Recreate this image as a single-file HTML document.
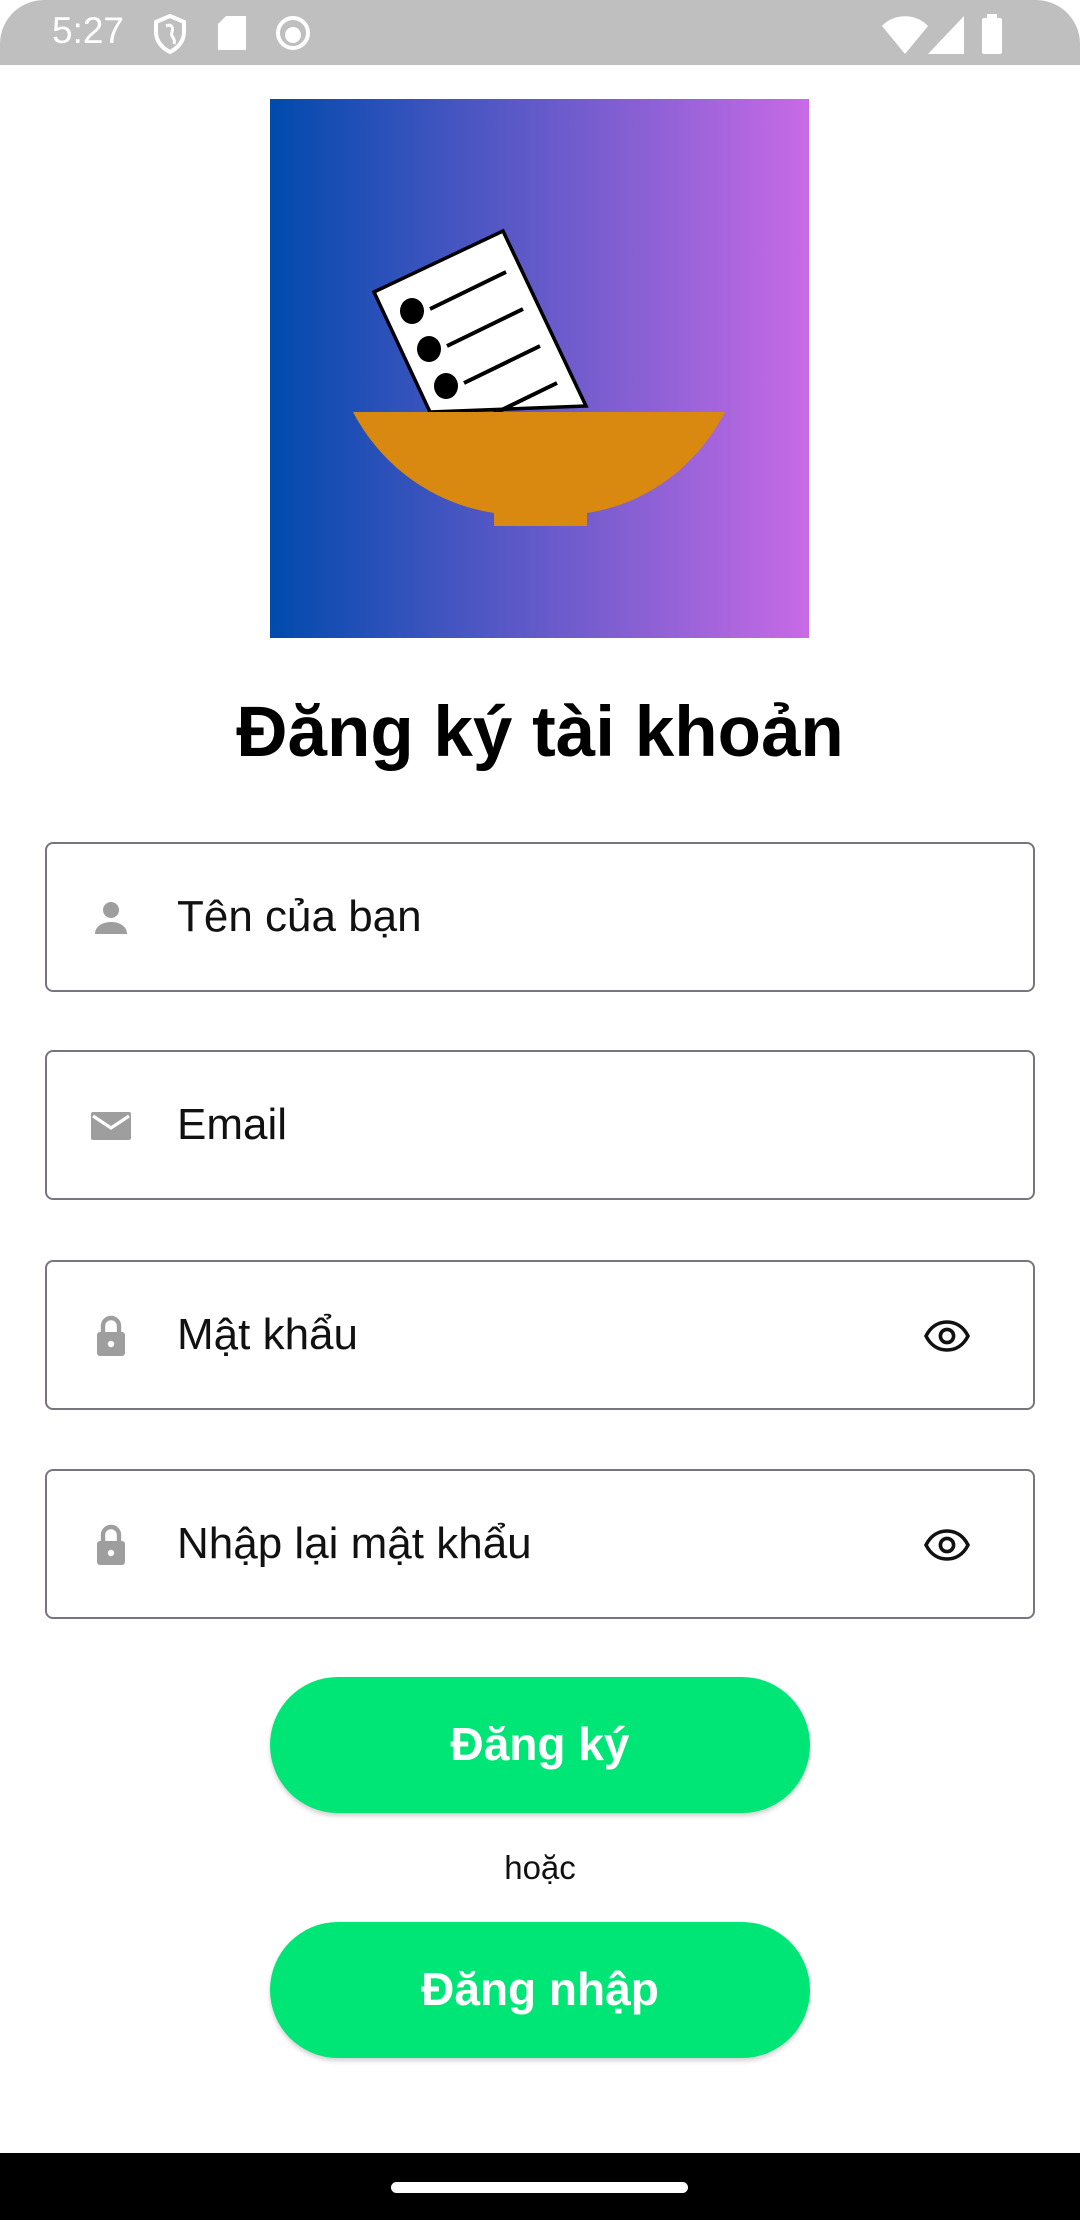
<!DOCTYPE html>
<html><head><meta charset="utf-8"><style>
*{margin:0;padding:0;box-sizing:border-box}
body{width:1080px;height:2220px;background:#fff;position:relative;overflow:hidden;font-family:"Liberation Sans","DejaVu Sans",sans-serif}
.sb{position:absolute;left:0;top:0;width:1080px;height:65px;background:#bfbfbf;border-radius:44px 44px 0 0}
.time{position:absolute;left:52px;top:10px;color:#fff;font-size:37px}
.logo{position:absolute;left:270px;top:99px;width:539px;height:539px}
h1{position:absolute;left:0;width:1080px;top:692px;text-align:center;font-size:71px;font-weight:bold;color:#000}
.f{position:absolute;left:45px;width:990px;height:150px;border:2.5px solid #79747e;border-radius:8px}
.f .t{position:absolute;left:130px;top:0;line-height:145px;font-size:44px;color:#111}
.f .ic{position:absolute;left:40px;top:50px;width:48px;height:48px}
.f .eye{position:absolute;left:876px;top:50px;width:48px;height:48px}
.btn{position:absolute;left:270px;width:540px;height:136px;border-radius:68px;background:#00e676;color:#fff;font-weight:bold;font-size:46px;text-align:center;line-height:134px;box-shadow:0 3px 5px rgba(0,0,0,.18)}
.or{position:absolute;left:0;width:1080px;top:1849px;text-align:center;font-size:33px;color:#111}
.nav{position:absolute;left:0;top:2153px;width:1080px;height:67px;background:#000}
.hd{position:absolute;left:391px;top:2182px;width:297px;height:11px;border-radius:6px;background:#fff}
</style></head><body>
<div class="sb">
<div class="time">5:27</div>
<svg style="position:absolute;left:152px;top:14px" width="36" height="40" viewBox="0 0 36 40"><path d="M18 2L4 8v10c0 9 6 16 14 20 8-4 14-11 14-20V8z" fill="none" stroke="#fff" stroke-width="4"/><path d="M14 12c4-2 8 0 6 6-2 5 4 6 2 12" fill="none" stroke="#fff" stroke-width="3"/></svg>
<svg style="position:absolute;left:218px;top:16px" width="28" height="34" viewBox="0 0 28 34"><path d="M8 0h20v34H0V8z" fill="#fff"/></svg>
<svg style="position:absolute;left:276px;top:16px" width="34" height="34"><circle cx="17" cy="17" r="15" fill="none" stroke="#fff" stroke-width="4"/><circle cx="17" cy="19" r="8" fill="#fff"/></svg>
<svg style="position:absolute;left:882px;top:16px" width="46" height="38" viewBox="0 0 46 38"><path d="M0 10C12-3 34-3 46 10L23 38z" fill="#fff"/></svg>
<svg style="position:absolute;left:928px;top:16px" width="36" height="38"><path d="M36 0V38H0z" fill="#fff"/></svg>
<svg style="position:absolute;left:980px;top:14px" width="24" height="40"><rect x="7" y="0" width="10" height="4" fill="#fff"/><rect x="2" y="4" width="20" height="36" rx="2" fill="#fff"/></svg>
</div>
<svg class="logo" viewBox="0 0 539 539">
<defs><linearGradient id="g" x1="0" x2="1"><stop offset="0" stop-color="#004aad"/><stop offset="1" stop-color="#c86ae6"/></linearGradient></defs>
<rect width="539" height="539" fill="url(#g)"/>
<polygon points="104,193 233,132 316,307 160,313" fill="#fff" stroke="#000" stroke-width="3.5"/>
<g fill="#000"><ellipse cx="142" cy="212" rx="12" ry="13"/><ellipse cx="159" cy="250" rx="12" ry="13"/><ellipse cx="176" cy="287" rx="12" ry="13"/></g>
<g stroke="#000" stroke-width="4"><line x1="160" y1="210" x2="236" y2="173"/><line x1="177" y1="247" x2="253" y2="210"/><line x1="194" y1="284" x2="270" y2="247"/><line x1="211" y1="321" x2="287" y2="284"/></g>
<path d="M83 313H455C425 370 375 405 317 414V427H224V414C166 405 113 370 83 313Z" fill="#d9890f"/>
</svg>
<h1>Đăng ký tài khoản</h1>

<div class="f" style="top:842px">
<svg class="ic" viewBox="0 0 24 24"><circle cx="12" cy="8" r="4" fill="#9e9e9e"/><path d="M4 20c0-4 4-6 8-6s8 2 8 6z" fill="#9e9e9e"/></svg>
<div class="t">Tên của bạn</div></div>

<div class="f" style="top:1050px">
<svg class="ic" viewBox="0 0 24 24"><path d="M3 5h18a1 1 0 0 1 1 1v12a1 1 0 0 1-1 1H3a1 1 0 0 1-1-1V6a1 1 0 0 1 1-1z" fill="#9e9e9e"/><path d="M3 7l9 6 9-6" fill="none" stroke="#fff" stroke-width="1.6"/></svg>
<div class="t">Email</div></div>

<div class="f" style="top:1260px">
<svg class="ic" viewBox="0 0 24 24"><path d="M8 10V7a4 4 0 0 1 8 0v3" fill="none" stroke="#9e9e9e" stroke-width="2.2"/><rect x="5" y="10" width="14" height="12" rx="1.5" fill="#9e9e9e"/><circle cx="12" cy="16" r="1.6" fill="#fff"/></svg>
<div class="t">Mật khẩu</div>
<svg class="eye" viewBox="0 0 24 24"><path d="M1.5 12C4 7 8 5 12 5s8 2 10.5 7C20 17 16 19 12 19S4 17 1.5 12z" fill="none" stroke="#111" stroke-width="1.8"/><circle cx="12" cy="12" r="3.3" fill="none" stroke="#111" stroke-width="1.8"/></svg>
</div>

<div class="f" style="top:1469px">
<svg class="ic" viewBox="0 0 24 24"><path d="M8 10V7a4 4 0 0 1 8 0v3" fill="none" stroke="#9e9e9e" stroke-width="2.2"/><rect x="5" y="10" width="14" height="12" rx="1.5" fill="#9e9e9e"/><circle cx="12" cy="16" r="1.6" fill="#fff"/></svg>
<div class="t">Nhập lại mật khẩu</div>
<svg class="eye" viewBox="0 0 24 24"><path d="M1.5 12C4 7 8 5 12 5s8 2 10.5 7C20 17 16 19 12 19S4 17 1.5 12z" fill="none" stroke="#111" stroke-width="1.8"/><circle cx="12" cy="12" r="3.3" fill="none" stroke="#111" stroke-width="1.8"/></svg>
</div>

<div class="btn" style="top:1677px">Đăng ký</div>
<div class="or">hoặc</div>
<div class="btn" style="top:1922px">Đăng nhập</div>
<div class="nav"></div><div class="hd"></div>
</body></html>
